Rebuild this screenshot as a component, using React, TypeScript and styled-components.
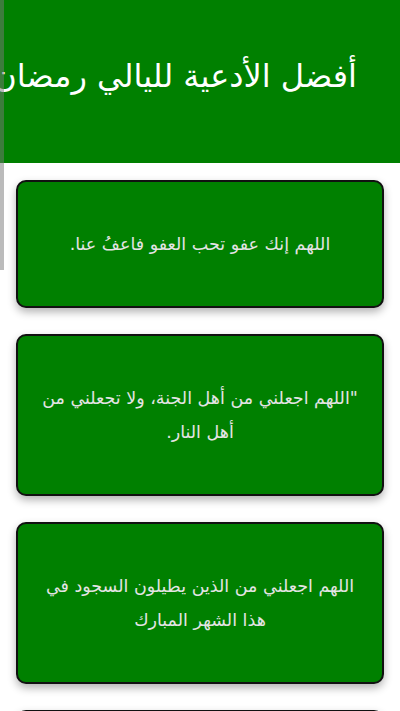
import * as React from 'react'
import styled, {createGlobalStyle} from 'styled-components'

const GlobalStyle = createGlobalStyle`
  html, body {
    margin: 0;
    padding: 0;
    background: #ffffff;
  }
  body {
    font-family: "DejaVu Sans", "Noto Sans", sans-serif;
    direction: rtl;
    overflow: hidden;
  }
`

const Page = styled.div`
  position: relative;
  width: 100%;
`

const Header = styled.header`
  height: 163px;
  background: #008000;
  display: flex;
  align-items: center;
  padding-right: 43px;
  overflow: hidden;
  white-space: nowrap;
`

const Title = styled.h1`
  margin: 0 0 12px;
  color: #ffffff;
  font-size: 32px;
  font-weight: normal;
`

const List = styled.main`
  display: flex;
  flex-direction: column;
  gap: 26px;
  padding: 17px 16px 0;
`

const Card = styled.div`
  min-height: 34px;
  background: #008000;
  border: 2px solid #111;
  border-radius: 10px;
  box-shadow: 0 4px 8px rgba(0, 0, 0, 0.3);
  padding: 45px 18px;
  text-align: center;
  color: #e4e4e4;
  font-size: 17.5px;
  line-height: 34px;
`

const ScrollThumb = styled.div`
  position: fixed;
  top: 0;
  left: 0;
  width: 4px;
  height: 270px;
  background: rgba(120, 120, 120, 0.5);
`

const duas = [
  'اللهم إنك عفو تحب العفو فاعفُ عنا.',
  '"اللهم اجعلني من أهل الجنة، ولا تجعلني من أهل النار.',
  'اللهم اجعلني من الذين يطيلون السجود في هذا الشهر المبارك',
  '',
]

const App = () => {
  return (
    <Page>
      <GlobalStyle />
      <Header>
        <Title>أفضل الأدعية لليالي رمضان</Title>
      </Header>
      <List>
        {duas.map((d, i) => (
          <Card key={i}>{d}</Card>
        ))}
      </List>
      <ScrollThumb />
    </Page>
  )
}

export default App
